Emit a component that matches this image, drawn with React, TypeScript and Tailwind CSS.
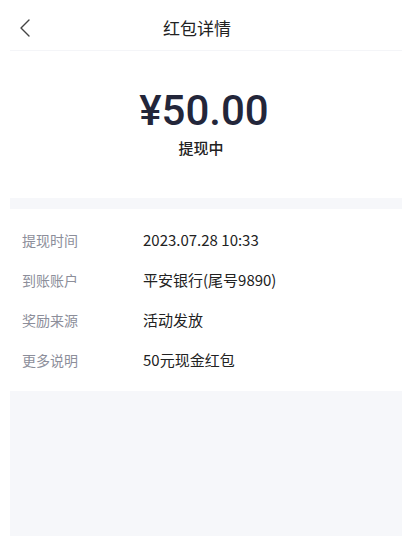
const rows = [
  { label: "提现时间", value: "2023.07.28 10:33" },
  { label: "到账账户", value: "平安银行(尾号9890)" },
  { label: "奖励来源", value: "活动发放" },
  { label: "更多说明", value: "50元现金红包" },
];

export default function App() {
  return (
    <div
      className="w-[402px] h-[536px] bg-white overflow-hidden flex flex-col"
      style={{ fontFamily: '"Noto Sans CJK SC", "Noto Sans", sans-serif' }}
    >
      {/* header */}
      <div className="relative h-[50px] flex items-center justify-center">
        <button className="absolute left-[18px] top-[18px] text-[#333]">
          <svg width="14" height="20" viewBox="0 0 14 20" fill="none">
            <path d="M11 2 L3 10 L11 18" stroke="#444" strokeWidth="1.4" strokeLinecap="round" strokeLinejoin="round" />
          </svg>
        </button>
        <h1 className="text-[17px] text-[#222] pt-[6px] mr-[8px]">红包详情</h1>
      </div>
      <div className="ml-[10px] h-px bg-[#f4f5f8]" />

      {/* amount */}
      <div className="flex flex-col items-center pt-[35px] h-[147px]">
        <div
          className="text-[42px] leading-[50px] font-medium text-[#23263a] ml-[6px]"
          style={{ fontFamily: "Roboto, sans-serif" }}
        >
          ¥50.00
        </div>
        <div className="mt-[1px] text-[15px] font-medium text-[#222]">提现中</div>
      </div>

      <div className="ml-[10px] h-[11px] bg-[#f6f7fa]" />

      {/* detail rows */}
      <div className="flex flex-col pt-[11px] pb-[11px]">
        {rows.map((r) => (
          <div key={r.label} className="flex items-center h-[40px]">
            <div className="w-[143px] pl-[22px] text-[14px] text-[#8c8e9a]">{r.label}</div>
            <div className="text-[15px] text-[#222]">{r.value}</div>
          </div>
        ))}
      </div>

      <div className="ml-[10px] flex-1 bg-[#f6f7fa]" />
    </div>
  );
}
